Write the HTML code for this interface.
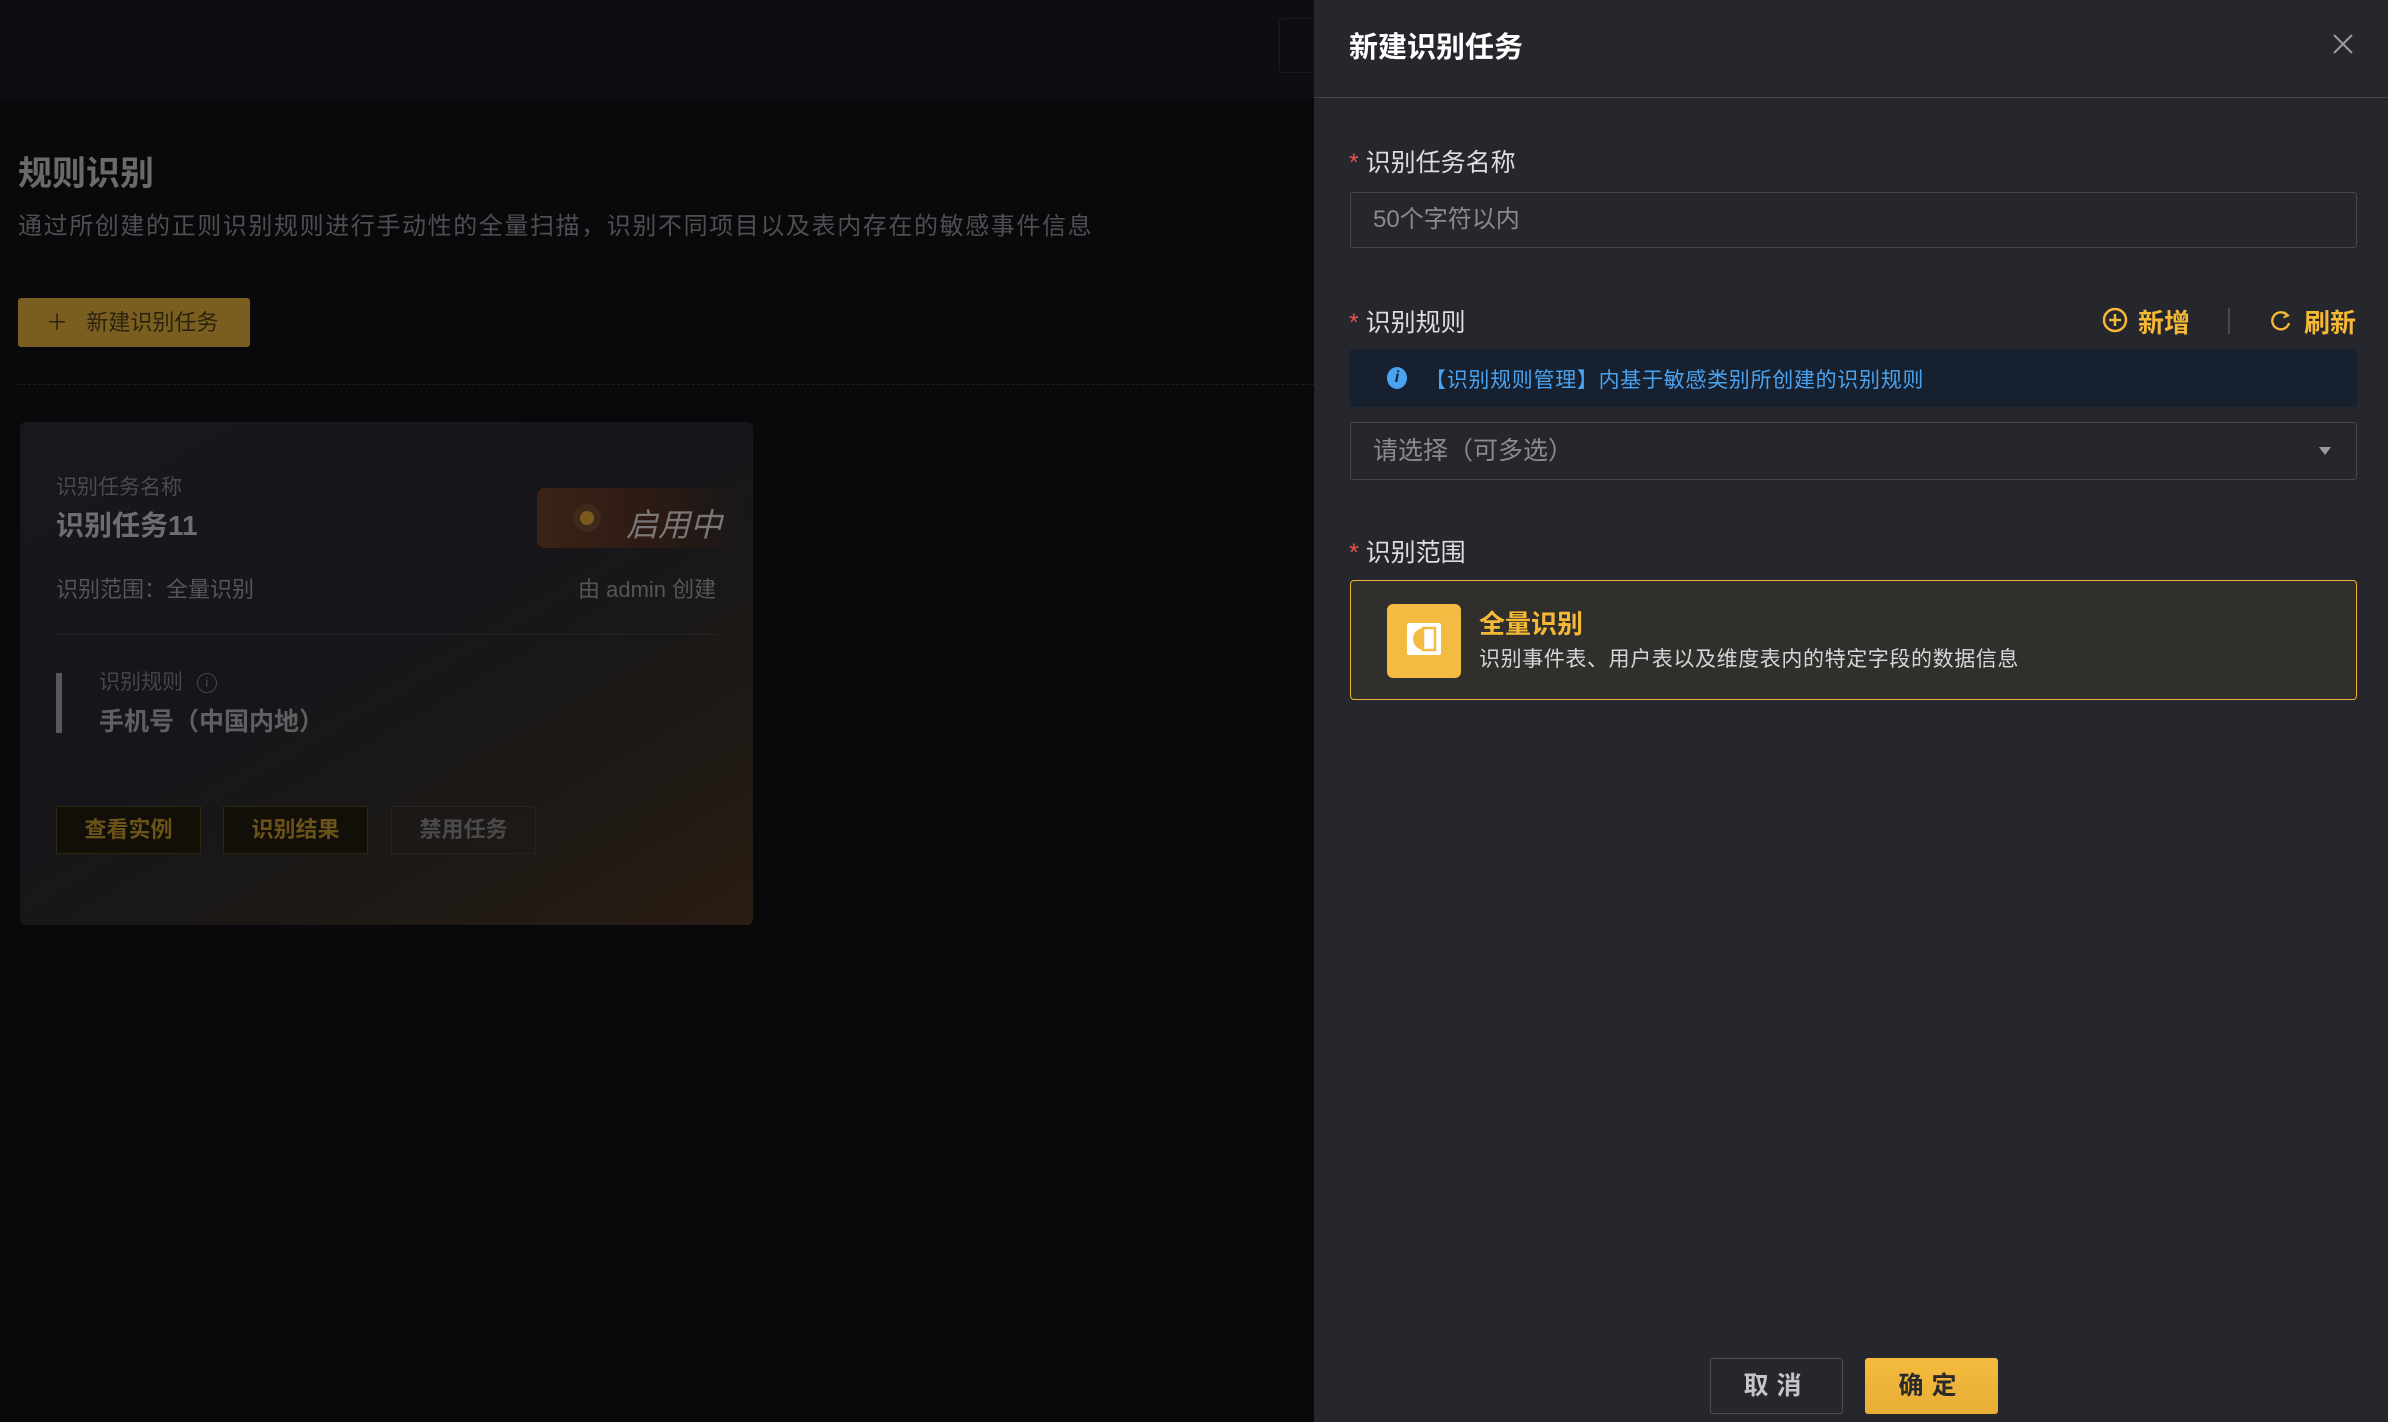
<!DOCTYPE html>
<html><head><meta charset="utf-8"><style>
*{margin:0;padding:0;box-sizing:border-box}
body{width:2388px;height:1422px;overflow:hidden;background:#09090b;font-family:"Liberation Sans","Noto Sans CJK SC",sans-serif;position:relative}
.a{position:absolute;white-space:nowrap}
</style></head><body>
<div class="a" style="left:0;top:0;width:1314px;height:99px;background:#0d0e12"></div>
<div class="a" style="left:1279px;top:18px;width:40px;height:55px;border:1px solid #1a1b20;border-radius:4px"></div>
<div class="a" style="left:18px;top:146px;font-size:34px;font-weight:bold;color:#6a6a6c">规则识别</div>
<div class="a" style="left:18px;top:206px;font-size:24px;letter-spacing:1.6px;color:#4e4f52">通过所创建的正则识别规则进行手动性的全量扫描，识别不同项目以及表内存在的敏感事件信息</div>
<div class="a" style="left:18px;top:298px;width:232px;height:49px;background:#7a5e1f;border-radius:3px;color:#2a220e;font-size:22px;line-height:49px;padding-left:28px">＋&nbsp;&nbsp;&nbsp;新建识别任务</div>
<div class="a" style="left:18px;top:384px;width:1296px;border-top:1px dashed #1e1f24"></div>
<div class="a" style="left:20px;top:422px;width:733px;height:503px;border-radius:6px;background:linear-gradient(150deg,#17181c 0%,#16161a 45%,#1d1915 75%,#2a1d14 100%)"></div>
<div class="a" style="left:56px;top:471px;font-size:21px;color:#4a4b4e">识别任务名称</div>
<div class="a" style="left:56px;top:504px;font-size:28px;font-weight:bold;color:#6e6e70">识别任务11</div>
<div class="a" style="left:537px;top:488px;width:206px;height:60px;border-radius:8px 0 0 8px;background:linear-gradient(90deg,#3c2216,#2a1a14 60%,rgba(30,24,20,0))"></div>
<div class="a" style="left:573px;top:504px;width:28px;height:28px;border-radius:50%;background:#3e2a1a"></div>
<div class="a" style="left:580px;top:511px;width:14px;height:14px;border-radius:50%;background:#7a5a1c"></div>
<div class="a" style="left:626px;top:500px;font-size:32px;font-style:italic;color:#7a7776">启用中</div>
<div class="a" style="left:56px;top:572px;font-size:22px;color:#55565a">识别范围：全量识别</div>
<div class="a" style="left:578px;top:572px;font-size:22px;color:#55565a">由 admin 创建</div>
<div class="a" style="left:56px;top:634px;width:661px;border-top:1px solid #232428"></div>
<div class="a" style="left:56px;top:673px;width:6px;height:60px;background:#58585a"></div>
<div class="a" style="left:99px;top:666px;font-size:21px;color:#45464a">识别规则 <span style="display:inline-block;width:20px;height:20px;border:1.5px solid #45464a;border-radius:50%;font-size:14px;text-align:center;line-height:17px;vertical-align:2px;margin-left:8px">i</span></div>
<div class="a" style="left:99px;top:702px;font-size:25px;font-weight:bold;color:#606062">手机号（中国内地）</div>
<div class="a" style="left:56px;top:806px;width:145px;height:48px;border:1px solid #2e2710;background:#120f08;color:#6a5218;font-size:22px;font-weight:bold;text-align:center;line-height:46px">查看实例</div>
<div class="a" style="left:223px;top:806px;width:145px;height:48px;border:1px solid #2e2710;background:#120f08;color:#6a5218;font-size:22px;font-weight:bold;text-align:center;line-height:46px">识别结果</div>
<div class="a" style="left:391px;top:806px;width:145px;height:48px;border:1px solid #232428;color:#4a4a4c;font-size:22px;font-weight:bold;text-align:center;line-height:46px">禁用任务</div>

<div class="a" style="left:1314px;top:0;width:1074px;height:1422px;background:#26272d"></div>
<div class="a" style="left:1314px;top:97px;width:1074px;border-top:1px solid #44454b"></div>
<div class="a" style="left:1349px;top:24px;font-size:29px;font-weight:bold;color:#fff">新建识别任务</div>
<svg class="a" style="left:2332px;top:33px" width="22" height="22" viewBox="0 0 22 22"><path d="M2 2L20 20M20 2L2 20" stroke="#9a9ba0" stroke-width="2"/></svg>

<div class="a" style="left:1349px;top:143px;font-size:25px;color:#dcdde0"><span style="color:#e8534a">*</span> 识别任务名称</div>
<div class="a" style="left:1350px;top:192px;width:1007px;height:56px;border:1px solid #46474d;border-radius:3px;font-size:24px;color:#8a8b90;line-height:54px;padding-left:22px">50个字符以内</div>

<div class="a" style="left:1349px;top:303px;font-size:25px;color:#dcdde0"><span style="color:#e8534a">*</span> 识别规则</div>
<svg class="a" style="left:2102px;top:307px" width="26" height="26" viewBox="0 0 26 26"><circle cx="13" cy="13" r="11" fill="none" stroke="#f5b935" stroke-width="2.5"/><path d="M13 7v12M7 13h12" stroke="#f5b935" stroke-width="2.5"/></svg>
<div class="a" style="left:2138px;top:303px;font-size:26px;font-weight:bold;color:#f5b935">新增</div>
<div class="a" style="left:2228px;top:308px;height:26px;border-left:2px solid #4a4b50"></div>
<svg class="a" style="left:2270px;top:309px" width="22" height="24" viewBox="0 0 22 24"><path d="M17 6A8.5 8.5 0 1 0 19 14" fill="none" stroke="#f5b935" stroke-width="2.3"/><path d="M14 3l4 3.5-4.5 2" fill="none" stroke="#f5b935" stroke-width="2"/></svg>
<div class="a" style="left:2304px;top:303px;font-size:26px;font-weight:bold;color:#f5b935">刷新</div>

<div class="a" style="left:1350px;top:349px;width:1007px;height:58px;background:#17202f;border-radius:3px"></div>
<div class="a" style="left:1387px;top:367px;width:20px;height:22px;border-radius:50%;background:#4aa3f0;color:#17202f;font-size:16px;font-weight:bold;font-style:italic;text-align:center;line-height:22px">i</div>
<div class="a" style="left:1425px;top:364px;font-size:21px;letter-spacing:0.7px;color:#4aa3f0">【识别规则管理】内基于敏感类别所创建的识别规则</div>

<div class="a" style="left:1350px;top:422px;width:1007px;height:58px;border:1px solid #46474d;border-radius:3px;font-size:25px;color:#8a8b90;line-height:56px;padding-left:22px">请选择（可多选）</div>
<svg class="a" style="left:2318px;top:446px" width="14" height="10" viewBox="0 0 14 10"><path d="M1 1h12L7 9z" fill="#9a9ba0"/></svg>

<div class="a" style="left:1349px;top:533px;font-size:25px;color:#dcdde0"><span style="color:#e8534a">*</span> 识别范围</div>
<div class="a" style="left:1350px;top:580px;width:1007px;height:120px;border:1.5px solid #e8b53a;border-radius:4px;background:#312f2b"></div>
<div class="a" style="left:1387px;top:604px;width:74px;height:74px;border-radius:6px;background:#f4bb42"></div>
<svg class="a" style="left:1407px;top:623px" width="34" height="32" viewBox="0 0 34 32"><rect x="0" y="0" width="34" height="32" rx="2" fill="#fff"/><rect x="16" y="5" width="12" height="22" fill="none" stroke="#f4bb42" stroke-width="2.5"/><path d="M17 5A11 11 0 0 0 17 27Z" fill="#f4bb42"/></svg>
<div class="a" style="left:1479px;top:604px;font-size:26px;font-weight:bold;color:#f5b935">全量识别</div>
<div class="a" style="left:1479px;top:643px;font-size:21px;letter-spacing:0.6px;color:#d5d6d9">识别事件表、用户表以及维度表内的特定字段的数据信息</div>

<div class="a" style="left:1710px;top:1358px;width:133px;height:56px;border:1px solid #4e4f55;border-radius:3px;color:#c4c5ca;font-size:25px;font-weight:bold;text-align:center;line-height:54px;letter-spacing:8px">取消</div>
<div class="a" style="left:1865px;top:1358px;width:133px;height:56px;border-radius:3px;background:linear-gradient(#f5bb3e,#e8ae35);color:#2a2a2a;font-size:25px;font-weight:bold;text-align:center;line-height:56px;letter-spacing:8px">确定</div>
</body></html>
